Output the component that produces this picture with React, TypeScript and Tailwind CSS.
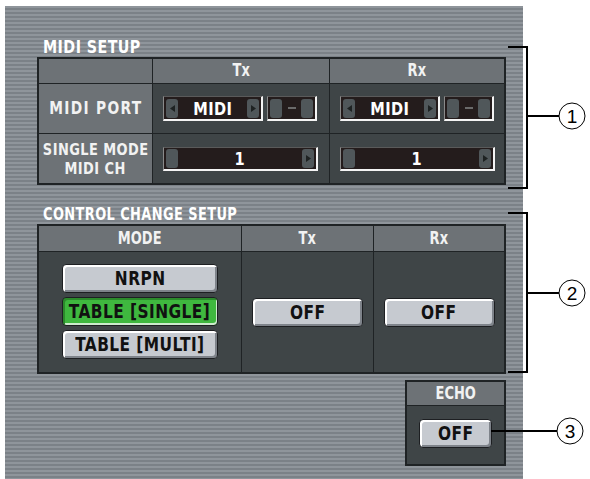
import type { ReactNode } from 'react';

// LCD-style lettering: tall, narrow and bold
const LCD = "font-['DejaVu_Sans_Condensed','DejaVu_Sans',sans-serif] font-bold";

function Lcd({ children, className = 'scale-x-[0.85]' }: { children: ReactNode; className?: string }) {
  return <span className={`${LCD} inline-block whitespace-nowrap ${className}`}>{children}</span>;
}

function SectionLabel({ children, fit = 'scale-x-[0.88]' }: { children: ReactNode; fit?: string }) {
  return (
    <div className="h-[22px] leading-[22px] text-white text-[18px] pl-[6px]">
      <Lcd className={`origin-left tracking-[0.5px] ${fit}`}>{children}</Lcd>
    </div>
  );
}

function HeadCell({ children }: { children?: ReactNode }) {
  return (
    <div className="bg-[#6d7276] flex items-center justify-center text-[17px] text-[#f2f2f2]">
      {children && <Lcd>{children}</Lcd>}
    </div>
  );
}

function NudgeKey({ dir }: { dir?: 'left' | 'right' }) {
  return (
    <div className="w-[12px] h-[19px] rounded-[3px] bg-[#50575a] flex items-center justify-center">
      {dir && (
        <svg width="5" height="7" viewBox="0 0 5 7">
          <polygon points={dir === 'left' ? '5,0 0,3.5 5,7' : '0,0 5,3.5 0,7'} fill="#1e2222" />
        </svg>
      )}
    </div>
  );
}

const FIELD =
  'bg-[#241c1c] border-t border-l border-t-[#5a5a5a] border-l-[#8a8a8a] border-r-2 border-b-2 border-r-[#f4f4f4] border-b-[#f4f4f4] flex items-center px-[2px]';

// dark value field with nudge keys on both ends
function ValueBox({
  value,
  left,
  right,
  className = '',
}: {
  value: string;
  left?: 'left' | 'right';
  right?: 'left' | 'right';
  className?: string;
}) {
  return (
    <div className={`${FIELD} ${className}`}>
      <NudgeKey dir={left} />
      <div className="flex-1 text-center text-[18px] leading-none text-white">
        <Lcd className="scale-x-[0.9] tracking-[0.5px]">{value}</Lcd>
      </div>
      <NudgeKey dir={right} />
    </div>
  );
}

function PortSelect() {
  return (
    <div className="flex gap-[4px]">
      <ValueBox value="MIDI" left="left" right="right" className="w-[100px] h-[25px]" />
      <div className={`${FIELD} w-[50px] h-[25px]`}>
        <NudgeKey />
        <div className="flex-1 flex justify-center">
          <div className="w-[8px] h-[2px] bg-[#6a6a6a]" />
        </div>
        <NudgeKey />
      </div>
    </div>
  );
}

function Key({ children, on = false, className = '' }: { children: ReactNode; on?: boolean; className?: string }) {
  return (
    <div
      className={`h-[29px] rounded-[4px] border border-[#1d1f22] flex items-center justify-center text-[19px] text-[#111] ${
        on
          ? 'bg-[#3fb83f] shadow-[inset_2px_2px_0_#2b8a2b,inset_-1px_-2px_0_#cdebcd]'
          : 'bg-[#c6cad0] shadow-[inset_2px_2px_0_#ffffff,inset_-2px_-2px_0_#7e838a]'
      } ${className}`}
    >
      <Lcd className="scale-x-[0.9] tracking-[0.5px]">{children}</Lcd>
    </div>
  );
}

function Callout() {
  return (
    <svg className="absolute inset-0 pointer-events-none" width="590" height="479" viewBox="0 0 590 479">
      <g stroke="#000" strokeWidth="2" fill="none">
        <path d="M508 47 H527 V188 H508" />
        <path d="M527 116 H559" />
        <path d="M508 213 H527 V372 H508" />
        <path d="M527 293 H559" />
        <path d="M491 431 H557" />
      </g>
      <g stroke="#000" strokeWidth="1" fill="#fff">
        <circle cx="572" cy="116" r="13" />
        <circle cx="572" cy="293" r="13" />
        <circle cx="570" cy="431" r="13" />
      </g>
      <g fontFamily="'Liberation Sans', Arial, sans-serif" fontSize="19" textAnchor="middle" fill="#000">
        <text x="572" y="123">1</text>
        <text x="572" y="300">2</text>
        <text x="570" y="438">3</text>
      </g>
    </svg>
  );
}

export default function App() {
  return (
    <div className="relative w-[590px] h-[479px] bg-white overflow-hidden">
      <div className="ml-[5px] mt-[6px] w-[518px] h-[473px] bg-[repeating-linear-gradient(180deg,#8f959b_0px,#8f959b_2px,#7b8187_2px,#7b8187_4px)] pl-[32px] pt-[29px]">
        {/* MIDI setup */}
        <SectionLabel>MIDI SETUP</SectionLabel>
        <div className="w-[469px] border-2 border-[#1f2325] bg-[#1f2325] grid grid-cols-[113px_176px_1fr] grid-rows-[24px_49px_49px] gap-[1px]">
          <HeadCell />
          <HeadCell>Tx</HeadCell>
          <HeadCell>Rx</HeadCell>

          <div className="bg-[#6d7276] flex items-center justify-center text-[17px] text-[#f2f2f2]">
            <Lcd className="scale-x-[0.9] tracking-[1.5px]">MIDI PORT</Lcd>
          </div>
          <div className="bg-[#3f4547] flex items-center pl-[10px]">
            <PortSelect />
          </div>
          <div className="bg-[#3f4547] flex items-center pl-[10px]">
            <PortSelect />
          </div>

          <div className="bg-[#6d7276] flex flex-col items-center justify-center text-[16px] leading-[19px] text-[#f2f2f2]">
            <Lcd className="scale-x-[0.9] tracking-[0.5px]">SINGLE MODE</Lcd>
            <Lcd className="scale-x-[0.9] tracking-[0.5px]">MIDI CH</Lcd>
          </div>
          <div className="bg-[#3f4547] flex items-center pl-[10px]">
            <ValueBox value="1" right="right" className="w-[155px] h-[24px]" />
          </div>
          <div className="bg-[#3f4547] flex items-center pl-[10px]">
            <ValueBox value="1" right="right" className="w-[155px] h-[24px]" />
          </div>
        </div>

        {/* Control change setup */}
        <div className="mt-[17px]">
          <SectionLabel fit="scale-x-[0.8]">CONTROL CHANGE SETUP</SectionLabel>
        </div>
        <div className="w-[469px] border-2 border-[#1f2325] bg-[#1f2325] grid grid-cols-[202px_131px_1fr] grid-rows-[25px_120px] gap-[1px]">
          <HeadCell>MODE</HeadCell>
          <HeadCell>Tx</HeadCell>
          <HeadCell>Rx</HeadCell>

          <div className="bg-[#3f4547] flex flex-col gap-[4px] pt-[12px] px-[23px]">
            <Key>NRPN</Key>
            <Key on>TABLE [SINGLE]</Key>
            <Key>TABLE [MULTI]</Key>
          </div>
          <div className="bg-[#3f4547] flex items-center justify-center">
            <Key className="w-[111px]">OFF</Key>
          </div>
          <div className="bg-[#3f4547] flex items-center justify-center">
            <Key className="w-[111px]">OFF</Key>
          </div>
        </div>

        {/* Echo */}
        <div className="mt-[6px] ml-[368px] w-[101px] h-[86px] border-2 border-[#1f2325] bg-[#1f2325] grid grid-rows-[23px_1fr] gap-[1px]">
          <HeadCell>ECHO</HeadCell>
          <div className="bg-[#3f4547] flex items-center justify-center pb-[4px]">
            <Key className="w-[73px]">OFF</Key>
          </div>
        </div>
      </div>
      <Callout />
    </div>
  );
}
